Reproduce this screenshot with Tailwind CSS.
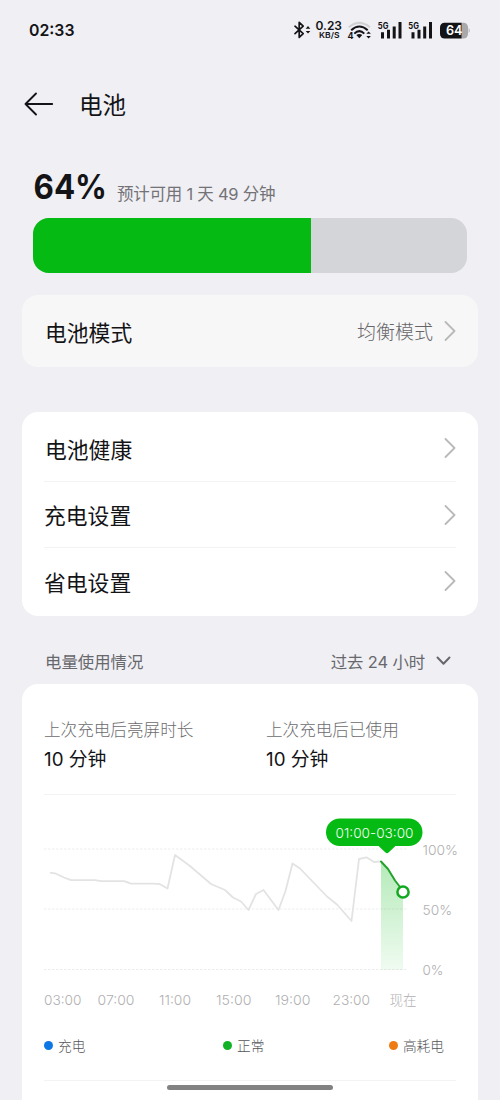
<!DOCTYPE html>
<html lang="zh-CN">
<head>
<meta charset="utf-8">
<title>电池</title>
<script src="https://cdn.jsdelivr.net/npm/@tailwindcss/browser@4"></script>
</head>
<body class="h-[1100px] overflow-hidden bg-[#efeff4] font-['Inter','Noto_Sans_CJK_SC',sans-serif] text-[#141417]">
<div class="relative flex h-[1100px] w-[500px] flex-col overflow-hidden">

  <!-- Status bar -->
  <header class="flex h-[60px] items-center justify-between pr-[29px] pl-[29px]">
    <svg class="h-5 w-12" viewBox="0 0 48 20"><text x="0" y="16" font-size="16.500" font-weight="600" fill="#141417" textLength="45.5" lengthAdjust="spacingAndGlyphs">02:33</text></svg>
    <svg class="h-6 w-[178px]" viewBox="293 18 178 24" fill="#141417">
      <g fill="none" stroke="#141417" stroke-width="1.7" stroke-linejoin="round" stroke-linecap="round">
        <path d="M295 26.2 L303.200 33.600 L299.200 37.300 V22.300 L303.200 26.200 L295 33.600"/>
      </g>
      <path d="M305.700 28.700 L308 26.100 L310.300 28.700Z M305.700 31 L308 33.600 L310.300 31Z"/>
      <text x="315.500" y="30" font-size="11.500" font-weight="600" textLength="26.500" lengthAdjust="spacingAndGlyphs">0.23</text>
      <text x="319" y="38.300" font-size="8" font-weight="600" textLength="20.500" lengthAdjust="spacingAndGlyphs">KB/S</text>
      <g fill="none" stroke-width="2">
        <path d="M348.800 27.300 Q359 18.500 370 27.300" stroke="#d0d0d3"/>
        <path d="M351.200 30.200 Q359.300 22.700 367.700 30.200" stroke="#141417"/>
        <path d="M354.300 33.600 Q359.300 28.700 364.300 33.600" stroke="#141417"/>
      </g>
      <path d="M356.300 35 Q359.300 33 362.300 35 L359.300 38.300Z M366.300 33.800 L368.600 31.400 L370.900 33.800Z M366.300 36 L368.600 38.400 L370.900 36Z"/>
      <text x="347.500" y="39.300" font-size="9" font-weight="700">4</text>
      <text x="377.800" y="28.800" font-size="9" font-weight="700" textLength="10.600" lengthAdjust="spacingAndGlyphs">5G</text>
      <path d="M381 32.300h3v6.200h-3z M387 29.800h3v8.700h-3z M392.700 26.600h3v11.900h-3z M398.500 22h3v16.500h-3z"/>
      <text x="408.300" y="28.800" font-size="9" font-weight="700" textLength="10.600" lengthAdjust="spacingAndGlyphs">5G</text>
      <path d="M411.500 32.300h3v6.200h-3z M417.500 29.800h3v8.700h-3z M423.200 26.600h3v11.900h-3z M429 22h3v16.500h-3z"/>
      <path d="M461 22.700h2.500a4.500 4.500 0 0 1 4.500 4.500v6.800a4.500 4.500 0 0 1-4.500 4.500H461z" fill="#a9a9ac"/>
      <path d="M468.700 28q2 2.500 0 5z" fill="#a9a9ac"/>
      <path d="M461.500 22.700h-17a4.500 4.500 0 0 0-4.500 4.500v6.800a4.500 4.500 0 0 0 4.500 4.500h17z"/>
      <text x="446" y="35.400" font-size="13" font-weight="600" fill="#fff" textLength="16.500" lengthAdjust="spacingAndGlyphs">64</text>
    </svg>
  </header>

  <!-- Page title -->
  <div class="flex h-[88px] items-center pl-6">
    <svg class="h-7 w-[30px]" viewBox="0 0 30 28" fill="none" stroke="#141417" stroke-width="1.900" stroke-linecap="round" stroke-linejoin="round"><path d="M12 3.500 L1.500 14 L12 24.500 M1.500 14H28.200"/></svg>
    <h1 class="mt-[3px] ml-[25px] text-[23.500px] leading-8 font-normal">电池</h1>
  </div>

  <!-- Battery level -->
  <section class="h-[147px] px-[33px] pt-[22px]">
    <div class="flex h-[48px] items-start">
      <svg class="h-[42px] w-[78px] overflow-visible" viewBox="0 0 78 42"><text x="0.500" y="29.300" font-size="33.500" font-weight="700" fill="#141417" textLength="73.500" lengthAdjust="spacingAndGlyphs">64%</text></svg>
      <p class="mt-[12px] ml-[6px] text-[16.500px] leading-6 tracking-[-0.25px] whitespace-nowrap text-[#737377]">预计可用 1 天 49 分钟</p>
    </div>
    <div class="h-[55px] overflow-hidden rounded-[16px] bg-[#d4d5d9]"><div class="h-full bg-[#04ba13]" style="width:64%"></div></div>
  </section>

  <!-- Battery mode -->
  <section class="mx-[22px] flex h-[72px] items-center rounded-[16px] bg-[#f7f7f7] pr-[22px] pl-[23px]">
    <span class="flex-1 pt-[4px] text-[21.800px]">电池模式</span>
    <span class="mr-[11px] pt-[5px] text-[19px] font-light text-[#666669]">均衡模式</span>
    <svg class="h-5 w-3" viewBox="0 0 12 20" fill="none" stroke="#b9b9bb" stroke-width="1.800" stroke-linecap="round" stroke-linejoin="round"><path d="M1.500 1 L10.500 10 L1.500 19"/></svg>
  </section>

  <!-- Settings list -->
  <section class="mx-[22px] mt-[45px] flex h-[204px] flex-col rounded-[16px] bg-white pt-[3px] pr-[22px] pb-[2px] pl-[22px]">
    <div class="flex h-[67px] items-center justify-between border-b border-[#f3f3f4]">
      <span class="ml-px pt-[4px] text-[21.800px]">电池健康</span>
      <svg class="h-5 w-3" viewBox="0 0 12 20" fill="none" stroke="#b9b9bb" stroke-width="1.800" stroke-linecap="round" stroke-linejoin="round"><path d="M1.500 1 L10.500 10 L1.500 19"/></svg>
    </div>
    <div class="flex h-[66px] items-center justify-between border-b border-[#f3f3f4]">
      <span class="pt-[4px] text-[21.800px]">充电设置</span>
      <svg class="h-5 w-3" viewBox="0 0 12 20" fill="none" stroke="#b9b9bb" stroke-width="1.800" stroke-linecap="round" stroke-linejoin="round"><path d="M1.500 1 L10.500 10 L1.500 19"/></svg>
    </div>
    <div class="flex h-[66px] items-center justify-between">
      <span class="pt-[4px] text-[21.800px]">省电设置</span>
      <svg class="h-5 w-3" viewBox="0 0 12 20" fill="none" stroke="#b9b9bb" stroke-width="1.800" stroke-linecap="round" stroke-linejoin="round"><path d="M1.500 1 L10.500 10 L1.500 19"/></svg>
    </div>
  </section>

  <!-- Usage heading -->
  <div class="flex h-[68px] items-center pt-[24px] pr-[49px] pl-[45px] text-[16.400px] text-[#68686c]">
    <span class="flex-1 pt-px">电量使用情况</span>
    <span class="mr-[11px] pt-px tracking-[-0.1px]">过去 24 小时</span>
    <svg class="mb-[2px] h-[10px] w-[15px]" viewBox="0 0 15 10" fill="none" stroke="#68686c" stroke-width="2" stroke-linecap="round" stroke-linejoin="round"><path d="M1.500 1.500 L7.500 7.700 L13.500 1.500"/></svg>
  </div>

  <!-- Usage card -->
  <section class="mx-[22px] flex-1 rounded-t-[16px] bg-white px-[22px]">
    <div class="grid h-[110px] grid-cols-[222px_1fr] pt-[34px]">
      <div>
        <p class="text-[16.600px] leading-6 font-light text-[#6c6c6f]">上次充电后亮屏时长</p>
        <p class="mt-[6px] text-[18.800px] leading-6">10 分钟</p>
      </div>
      <div>
        <p class="text-[16.600px] leading-6 font-light text-[#6c6c6f]">上次充电后已使用</p>
        <p class="mt-[6px] text-[18.800px] leading-6">10 分钟</p>
      </div>
    </div>
    <div class="h-px bg-[#f3f3f4]"></div>

    <svg class="block h-[225px] w-[416px]" viewBox="44 795 416 225">
      <defs><linearGradient id="use" x1="0" y1="0" x2="0" y2="1"><stop offset="0" stop-color="#04ba13" stop-opacity=".3"/><stop offset="1" stop-color="#04ba13" stop-opacity=".06"/></linearGradient></defs>
      <path d="M44 849H408M44 909H408M44 969.500H408" stroke="#ededee" stroke-width="1.200" stroke-dasharray="2.500 1.500"/>
      <path d="M381 861 L388 869 L403 892 V970 H381Z" fill="url(#use)"/>
      <path d="M50 872.700 L56 873.700 L64 877.500 L71 880.200 H95 L101 881.200 H124 L131 883.700 H153 L160 884.200 L167.500 888.500 L175 855 L190 866 L211 884 L225 890 L233 897.500 L241 901.500 L248.500 910 L256 894 L263.500 890 L278.500 910 L285.500 891 L292.500 863.500 L300 868.500 L327 896.500 L337 904.500 L351.500 921 L359 859 L366.500 857.300 L374 862 L380 861.500" fill="none" stroke="#e3e3e4" stroke-width="1.800" stroke-linejoin="round"/>
      <path d="M381 861.500 L388 869 L395 880.500 L400 887" fill="none" stroke="#25a22d" stroke-width="2" stroke-linecap="round" stroke-linejoin="round"/>
      <circle cx="403" cy="892" r="5.600" fill="#fff" stroke="#13a91f" stroke-width="2.500"/>
      <rect x="326" y="818.500" width="96.500" height="27.500" rx="13.750" fill="#04ba13"/>
      <path d="M378 845.500h18l-7.500 7.100q-1.500 1.400-3 0z" fill="#04ba13"/>
      <text x="335.500" y="837.700" font-size="13.500" font-weight="300" fill="#f2fcf3" textLength="78" lengthAdjust="spacingAndGlyphs">01:00-03:00</text>
      <g fill="#b0b0b2" font-size="13.500" font-weight="300">
        <text x="422.500" y="854.700" textLength="35.500" lengthAdjust="spacingAndGlyphs">100%</text>
        <text x="422.500" y="915" textLength="29.500" lengthAdjust="spacingAndGlyphs">50%</text>
        <text x="422.500" y="975.200" textLength="21" lengthAdjust="spacingAndGlyphs">0%</text>
        <text x="44" y="1005.400" textLength="37.500" lengthAdjust="spacingAndGlyphs">03:00</text>
        <text x="97.500" y="1005.400" textLength="37" lengthAdjust="spacingAndGlyphs">07:00</text>
        <text x="159" y="1005.400" textLength="32" lengthAdjust="spacingAndGlyphs">11:00</text>
        <text x="216" y="1005.400" textLength="35.500" lengthAdjust="spacingAndGlyphs">15:00</text>
        <text x="275" y="1005.400" textLength="35.500" lengthAdjust="spacingAndGlyphs">19:00</text>
        <text x="332.500" y="1005.400" textLength="37.500" lengthAdjust="spacingAndGlyphs">23:00</text>
        <text x="389.500" y="1005.400">现在</text>
      </g>
    </svg>

    <div class="flex h-[61px] items-start justify-between border-b border-[#f3f3f4] pt-[16px] pr-[12px] text-[13.700px] leading-5 font-light text-[#545458]">
      <span class="flex items-center gap-[5px]"><i class="mb-[2px] size-[9px] rounded-full bg-[#0d78e4]"></i>充电</span>
      <span class="ml-[13px] flex items-center gap-[5px]"><i class="mb-[2px] size-[9px] rounded-full bg-[#12b226]"></i>正常</span>
      <span class="flex items-center gap-[5px]"><i class="mb-[2px] size-[9px] rounded-full bg-[#ee7b12]"></i>高耗电</span>
    </div>
  </section>

  <!-- Gesture handle -->
  <div class="absolute bottom-[10px] left-[167px] h-[5.500px] w-[166px] rounded-full bg-[#828282]"></div>
</div>
</body>
</html>
